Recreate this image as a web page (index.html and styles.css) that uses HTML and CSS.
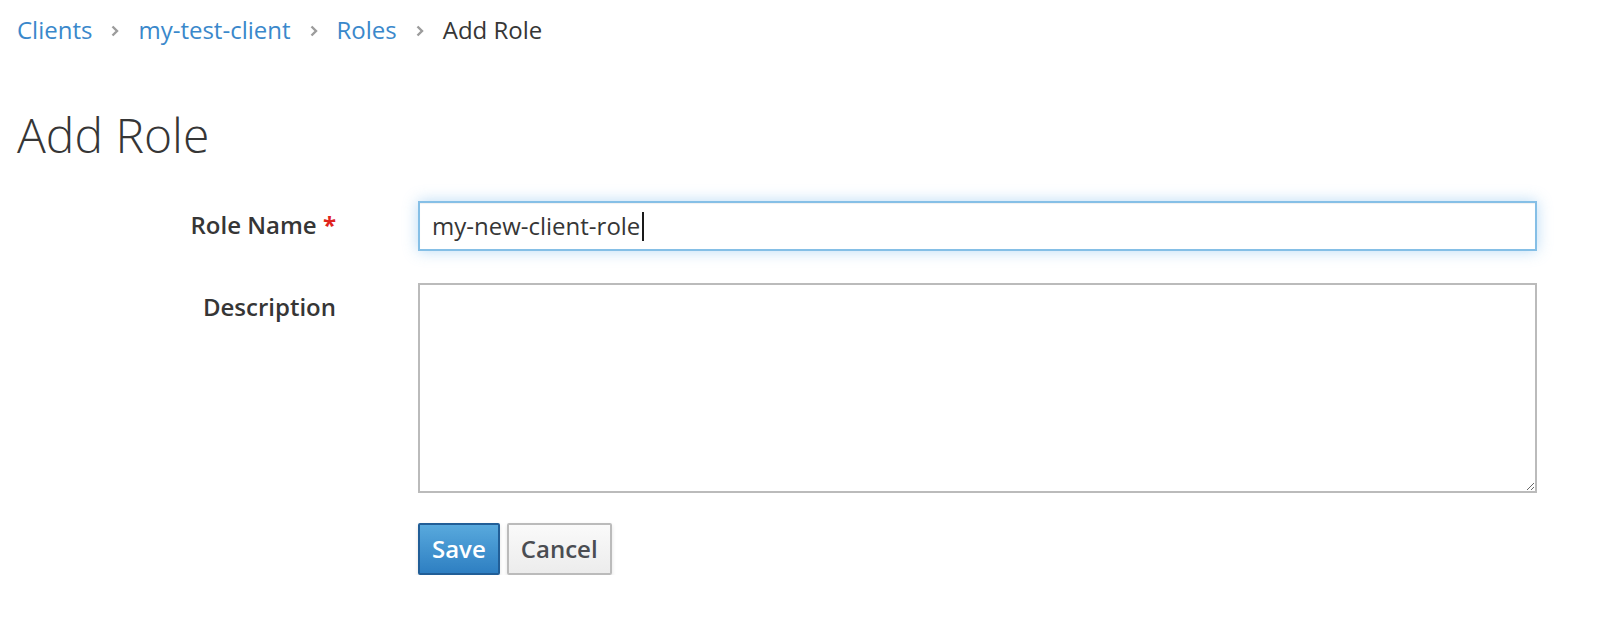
FILE: index.html
```html
<!DOCTYPE html>
<html lang="en">
<head>
<meta charset="utf-8">
<title>Add Role</title>
<link rel="stylesheet" href="styles.css">
</head>
<body>
<div class="page">
  <nav class="breadcrumb">
    <a class="crumb" href="#">Clients</a>
    <svg class="sep" width="8" height="12" viewBox="0 0 8 12"><polyline points="1.5,1.5 6,6 1.5,10.5" fill="none" stroke="#9c9c9c" stroke-width="2.4"/></svg>
    <a class="crumb" href="#">my-test-client</a>
    <svg class="sep" width="8" height="12" viewBox="0 0 8 12"><polyline points="1.5,1.5 6,6 1.5,10.5" fill="none" stroke="#9c9c9c" stroke-width="2.4"/></svg>
    <a class="crumb" href="#">Roles</a>
    <svg class="sep" width="8" height="12" viewBox="0 0 8 12"><polyline points="1.5,1.5 6,6 1.5,10.5" fill="none" stroke="#9c9c9c" stroke-width="2.4"/></svg>
    <span class="crumb current">Add Role</span>
  </nav>

  <h1 class="title">Add Role</h1>

  <form class="form">
    <div class="row">
      <label class="label">Role Name <span class="req">*</span></label>
      <div class="field">
        <div class="control focused"><span class="value">my-new-client-role</span><span class="caret"></span></div>
      </div>
    </div>
    <div class="row row-gap">
      <label class="label">Description</label>
      <div class="field">
        <textarea class="control textarea"></textarea>
      </div>
    </div>
    <div class="row row-gap-btn">
      <div></div>
      <div class="actions">
        <button type="button" class="btn btn-primary">Save</button>
        <button type="button" class="btn btn-default">Cancel</button>
      </div>
    </div>
  </form>
</div>
</body>
</html>
```

FILE: styles.css
```css
* { box-sizing: border-box; }

html, body {
  margin: 0;
  padding: 0;
  background: #ffffff;
}

body {
  font-family: "Open Sans", "Noto Sans", sans-serif;
  font-size: 24px;
  color: #363636;
}

.page {
  padding: 13px 17px 0 17px;
}

.breadcrumb {
  display: flex;
  align-items: center;
  height: 34px;
  line-height: 34px;
}

.crumb {
  color: #3a88cb;
  text-decoration: none;
  font-size: 24px;
}

.crumb.current {
  color: #363636;
}

.sep {
  margin: 2px 19px 0 19px;
  display: block;
}

.title {
  margin: 61px 0 0 0;
  font-size: 48px;
  font-weight: 300;
  line-height: 53px;
  color: #363636;
}

.form {
  margin-top: 40px;
}

.row {
  display: grid;
  grid-template-columns: 319px 1119px;
  column-gap: 82px;
}

.row-gap {
  margin-top: 32px;
}

.row-gap-btn {
  margin-top: 30px;
}

.label {
  text-align: right;
  font-weight: 600;
  line-height: 34px;
  padding-top: 7px;
  color: #363636;
}

.req {
  color: #e0241e;
  font-weight: 700;
}

.control {
  display: block;
  width: 100%;
  border: 2px solid #bbbbbb;
  background: #ffffff;
  font-family: "Open Sans", "Noto Sans", sans-serif;
  font-size: 24px;
  color: #363636;
  border-radius: 0;
}

.focused {
  height: 50px;
  padding: 0 12px;
  display: flex;
  align-items: center;
  border-color: #85bfe6;
  box-shadow: inset 0 1px 1px rgba(0, 0, 0, 0.06), 0 0 14px rgba(102, 175, 233, 0.45);
  line-height: 34px;
}

.caret {
  display: inline-block;
  width: 2px;
  height: 29px;
  background: #1a1a1a;
  margin-left: 2px;
}

.textarea {
  height: 210px;
  resize: vertical;
  padding: 8px 12px;
  outline: none;
}

.actions {
  display: flex;
  gap: 7px;
}

.btn {
  height: 52px;
  padding: 0 12px;
  border: 2px solid;
  border-radius: 2px;
  font-family: "Open Sans", "Noto Sans", sans-serif;
  font-size: 24px;
  font-weight: 600;
  line-height: 1;
  box-shadow: 0 2px 4px rgba(3, 3, 3, 0.12);
  cursor: pointer;
}

.btn-primary {
  color: #ffffff;
  background: linear-gradient(to bottom, #58a9dd 0%, #2e7fc2 100%);
  border-color: #215e97;
}

.btn-default {
  color: #4a4d52;
  background: linear-gradient(to bottom, #fafafa 0%, #ececec 100%);
  border-color: #bbbbbb;
}
```
